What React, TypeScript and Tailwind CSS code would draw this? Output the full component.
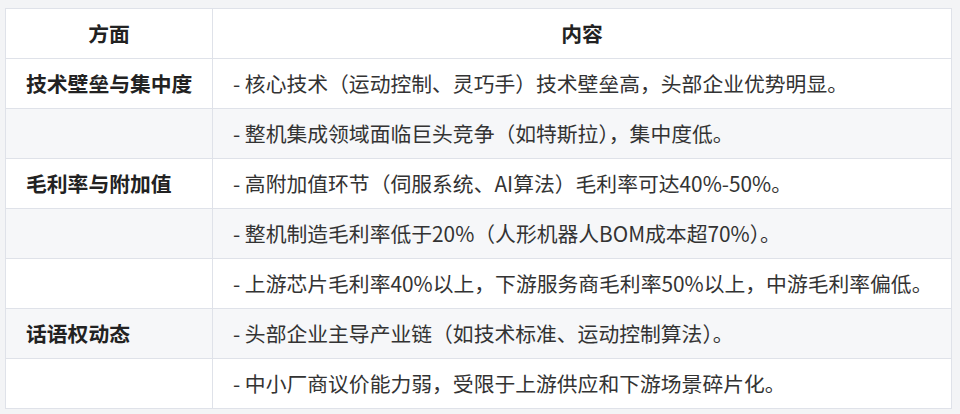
import React from "react";

const rows: [string, string][] = [
  ["技术壁垒与集中度", "- 核心技术（运动控制、灵巧手）技术壁垒高，头部企业优势明显。"],
  ["", "- 整机集成领域面临巨头竞争（如特斯拉），集中度低。"],
  ["毛利率与附加值", "- 高附加值环节（伺服系统、AI算法）毛利率可达40%-50%。"],
  ["", "- 整机制造毛利率低于20%（人形机器人BOM成本超70%）。"],
  ["", "- 上游芯片毛利率40%以上，下游服务商毛利率50%以上，中游毛利率偏低。"],
  ["话语权动态", "- 头部企业主导产业链（如技术标准、运动控制算法）。"],
  ["", "- 中小厂商议价能力弱，受限于上游供应和下游场景碎片化。"],
];

export default function App() {
  return (
    <div
      className="w-[960px] h-[414px] bg-[#f3f4f6] pl-[5px] pt-[8px] overflow-hidden"
      style={{ fontFamily: '"Noto Sans CJK SC", "Noto Sans", sans-serif' }}
    >
      <table className="border-collapse w-[947px] bg-white text-[20.8px] text-[#333333] table-fixed">
        <colgroup>
          <col className="w-[207px]" />
          <col />
        </colgroup>
        <thead>
          <tr className="h-[50px]">
            <th className="border border-[#dfe2e9] font-bold text-[#222222] text-center">方面</th>
            <th className="border border-[#dfe2e9] font-bold text-[#222222] text-center">内容</th>
          </tr>
        </thead>
        <tbody>
          {rows.map(([a, b], i) => (
            <tr key={i} className={`h-[50px] ${i % 2 === 1 ? "bg-[#f6f7f9]" : "bg-white"}`}>
              <td className="border border-[#dfe2e9] px-[20px] font-bold text-[#222222] whitespace-nowrap">{a}</td>
              <td className="border border-[#dfe2e9] px-[20px] whitespace-nowrap">{b}</td>
            </tr>
          ))}
        </tbody>
      </table>
    </div>
  );
}
